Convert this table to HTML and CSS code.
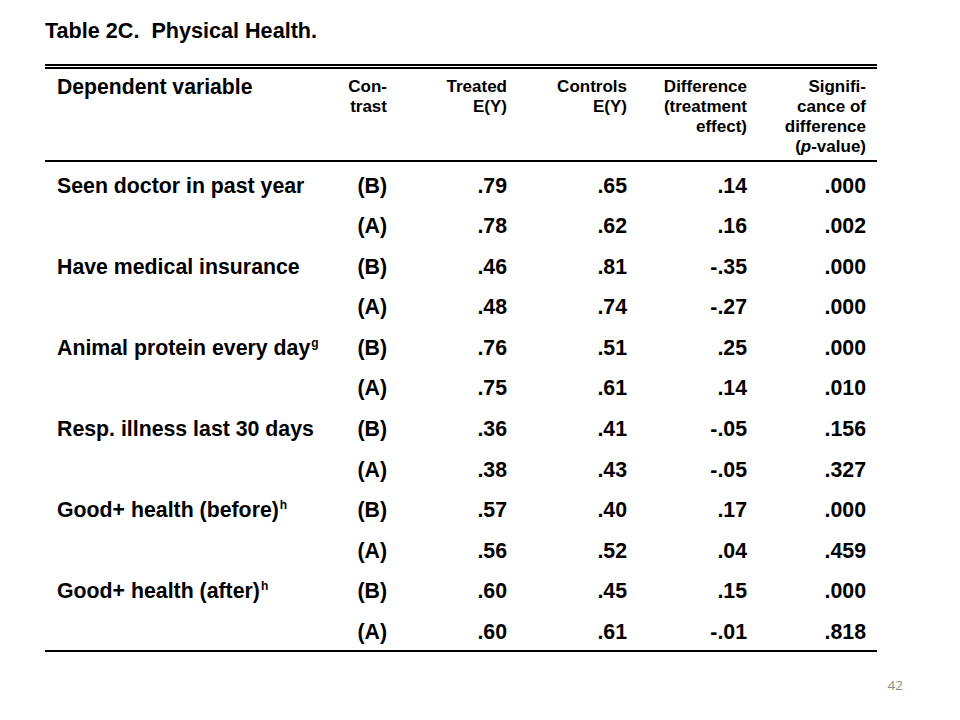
FILE: index.html
```html
<!DOCTYPE html>
<html lang="en">
<head>
<meta charset="utf-8">
<title>Table 2C. Physical Health.</title>
<link rel="stylesheet" href="styles.css">
</head>
<body>
<div class="slide">
  <h1 class="title">Table 2C.&nbsp; Physical Health.</h1>
  <div class="table-wrap">
    <table class="results">
      <colgroup>
        <col class="c-var"><col class="c-con"><col class="c-num"><col class="c-num"><col class="c-num"><col class="c-sig">
      </colgroup>
      <thead>
        <tr>
          <th class="var-head">Dependent variable</th>
          <th>Con-<br>trast</th>
          <th>Treated<br>E(Y)</th>
          <th>Controls<br>E(Y)</th>
          <th>Difference<br>(treatment<br>effect)</th>
          <th class="last">Signifi-<br>cance of<br>difference<br>(<i>p</i>-value)</th>
        </tr>
      </thead>
      <tbody>
        <tr class="first"><td class="var">Seen doctor in past year</td><td>(B)</td><td>.79</td><td>.65</td><td>.14</td><td class="last">.000</td></tr>
        <tr><td class="var"></td><td>(A)</td><td>.78</td><td>.62</td><td>.16</td><td class="last">.002</td></tr>
        <tr><td class="var">Have medical insurance</td><td>(B)</td><td>.46</td><td>.81</td><td>-.35</td><td class="last">.000</td></tr>
        <tr><td class="var"></td><td>(A)</td><td>.48</td><td>.74</td><td>-.27</td><td class="last">.000</td></tr>
        <tr><td class="var">Animal protein every day<sup>g</sup></td><td>(B)</td><td>.76</td><td>.51</td><td>.25</td><td class="last">.000</td></tr>
        <tr><td class="var"></td><td>(A)</td><td>.75</td><td>.61</td><td>.14</td><td class="last">.010</td></tr>
        <tr><td class="var">Resp. illness last 30 days</td><td>(B)</td><td>.36</td><td>.41</td><td>-.05</td><td class="last">.156</td></tr>
        <tr><td class="var"></td><td>(A)</td><td>.38</td><td>.43</td><td>-.05</td><td class="last">.327</td></tr>
        <tr><td class="var">Good+ health (before)<sup>h</sup></td><td>(B)</td><td>.57</td><td>.40</td><td>.17</td><td class="last">.000</td></tr>
        <tr><td class="var"></td><td>(A)</td><td>.56</td><td>.52</td><td>.04</td><td class="last">.459</td></tr>
        <tr><td class="var">Good+ health (after)<sup>h</sup></td><td>(B)</td><td>.60</td><td>.45</td><td>.15</td><td class="last">.000</td></tr>
        <tr><td class="var"></td><td>(A)</td><td>.60</td><td>.61</td><td>-.01</td><td class="last">.818</td></tr>
      </tbody>
    </table>
  </div>
  <footer class="footer"><span class="page-num">42</span></footer>
</div>
</body>
</html>
```

FILE: styles.css
```css
html, body {
  margin: 0;
  padding: 0;
  background: #ffffff;
}

body {
  font-family: "Liberation Sans", Arial, sans-serif;
  color: #000000;
}

.slide {
  width: 960px;
  height: 720px;
  box-sizing: border-box;
  padding: 19px 83px 0 45px;
  display: flex;
  flex-direction: column;
}

.title {
  margin: 0 0 21px 0;
  font-size: 21.6px;
  line-height: 24px;
  font-weight: bold;
}

.table-wrap {
  width: 832px;
  border-top: 2px solid #000;
  padding-top: 1px;
}

.results {
  width: 832px;
  table-layout: fixed;
  border-collapse: collapse;
  border-top: 2px solid #000;
  border-bottom: 2px solid #000;
  font-weight: bold;
}

.c-var { width: 282px; }
.c-con { width: 60px; }
.c-num { width: 120px; }
.c-sig { width: 130px; }

.results th {
  font-size: 17px;
  line-height: 20px;
  font-weight: bold;
  text-align: right;
  vertical-align: top;
  padding: 8px 0 3px 0;
  border-bottom: 2px solid #000;
}

.results th.var-head {
  text-align: left;
  font-size: 21.2px;
  padding-left: 12px;
}

.results th.last,
.results td.last {
  padding-right: 11px;
}

.results td {
  font-size: 21.3px;
  line-height: 24px;
  height: 40.6px;
  box-sizing: border-box;
  padding: 10px 0 6px 0;
  text-align: right;
  vertical-align: top;
  white-space: nowrap;
}

.results tr.first td {
  padding-top: 12px;
  height: 42.6px;
}

.results td.var {
  text-align: left;
  padding-left: 12px;
}

.results sup {
  font-size: 12px;
  line-height: 0;
  vertical-align: 8px;
  margin-left: 1px;
}

.footer {
  display: flex;
  justify-content: flex-end;
  margin-top: 24px;
  width: 832px;
}

.page-num {
  font-family: "Open Sans", "Liberation Sans", sans-serif;
  font-size: 13.5px;
  line-height: 18px;
  color: #8c8c8c;
  margin-right: -26px;
}
```
